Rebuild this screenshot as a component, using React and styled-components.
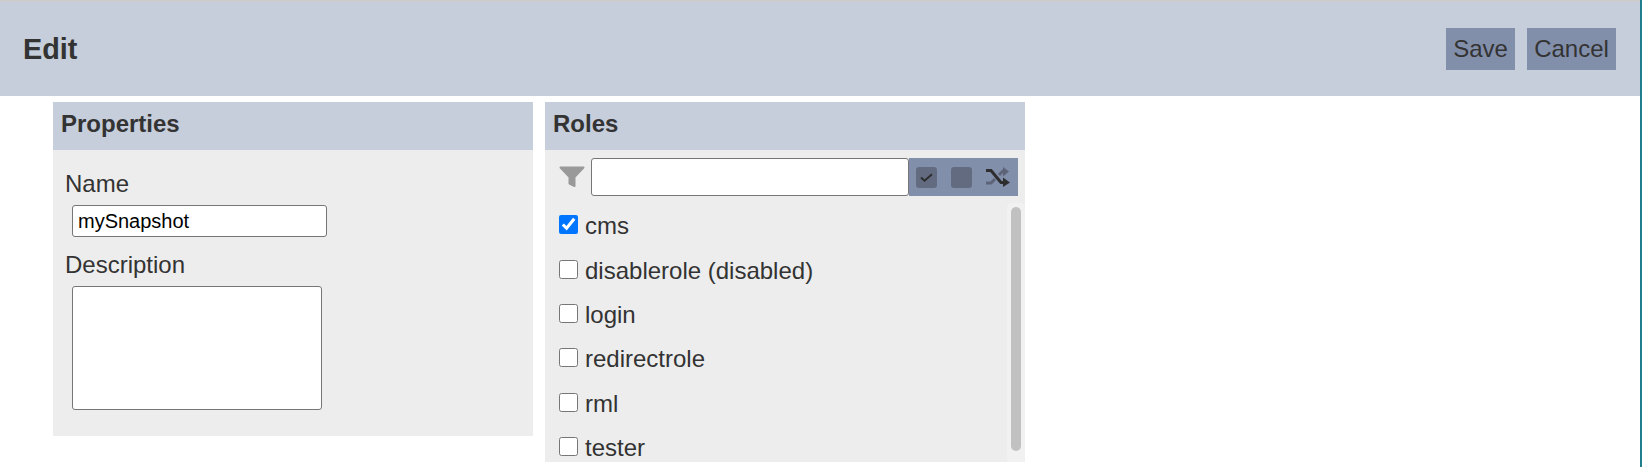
import React from 'react';
import styled, { createGlobalStyle } from 'styled-components';

const Global = createGlobalStyle`
  html, body { margin: 0; padding: 0; height: 467px; overflow: hidden; background: #fff; }
  body { font-family: "Liberation Sans", Arial, sans-serif; color: #333; }
  * { box-sizing: border-box; }
`;

const Page = styled.div`
  width: 1642px;
  height: 467px;
  overflow: hidden;
  border-right: 2px solid #1f7f8c;
`;
const TopBar = styled.header`
  height: 96px;
  background: #c6cddb;
  border-top: 2px solid #ccc;
  display: flex;
  align-items: center;
  justify-content: space-between;
  padding: 0 24px 0 23px;
`;
const Title = styled.h1`
  margin: 0;
  font-size: 28.8px;
  font-weight: 700;
`;
const Actions = styled.div`
  display: flex;
  gap: 12px;
`;
const ActionButton = styled.button`
  height: 42px;
  min-width: ${p => p.$minWidth}px;
  padding: 0 7px;
  border: 0;
  background: #828fab;
  color: #333;
  font: 24px "Liberation Sans", Arial, sans-serif;
`;
const Panels = styled.main`
  display: flex;
  padding: 6px 0 0 53px;
  gap: 12px;
`;
const Panel = styled.section`
  width: 480px;
  height: ${p => p.$height}px;
  background: #ededed;
  overflow: hidden;
`;
const PanelHead = styled.h2`
  margin: 0;
  height: 48px;
  line-height: 44px;
  padding-left: 8px;
  background: #c6cddb;
  font-size: 24px;
  font-weight: 700;
`;
const Form = styled.div`
  padding: 21px 0 0 12px;
`;
const Label = styled.label`
  display: block;
  font-size: 24px;
  line-height: 26px;
`;
const NameInput = styled.input`
  display: block;
  width: 255px;
  height: 32px;
  margin: 8px 0 15px 7px;
  padding: 1px 5px;
  border: 1px solid #767676;
  border-radius: 3px;
  background: #fff;
  color: #000;
  font: 20px "Liberation Sans", Arial, sans-serif;
`;
const DescInput = styled.textarea`
  display: block;
  width: 250px;
  height: 124px;
  margin: 8px 0 0 7px;
  border: 1px solid #767676;
  border-radius: 3px;
  background: #fff;
  resize: none;
`;
const FilterRow = styled.div`
  display: flex;
  align-items: center;
  height: 38px;
  margin: 8px 7px 0 14px;
`;
const FunnelWrap = styled.span`
  display: flex;
  width: 32px;
  flex: none;
`;
const FilterInput = styled.input`
  flex: 1;
  min-width: 0;
  height: 38px;
  padding: 1px 6px;
  border: 1px solid #767676;
  border-radius: 3px;
  background: #fff;
`;
const Tools = styled.div`
  width: 109px;
  height: 38px;
  background: #828fab;
  display: flex;
  align-items: center;
  padding-left: 7px;
  gap: 14px;
  flex: none;
`;
const ToolBox = styled.span`
  width: 21px;
  height: 21px;
  border-radius: 3px;
  background: #636b80;
  display: flex;
  align-items: center;
  justify-content: center;
`;
const ListArea = styled.div`
  position: relative;
  padding: 9px 0 0 14px;
`;
const Row = styled.label`
  display: flex;
  align-items: center;
  height: 44.4px;
  padding-bottom: 2px;
  font-size: 24px;
  gap: 7px;
`;
const Check = styled.input`
  width: 19px;
  height: 19px;
  margin: 0 0 3px 0;
  accent-color: #0075ff;
`;
const Track = styled.div`
  position: absolute;
  top: 7px;
  right: 0;
  width: 18px;
  height: 270px;
  background: #f1f1f1;
  border-radius: 5px 5px 0 0;
  padding: 4px 4px 0;
`;
const Thumb = styled.div`
  width: 10px;
  height: 244px;
  background: #c1c1c1;
  border-radius: 5px;
`;

const Funnel = () => (
  <svg width="26" height="22" viewBox="0 0 26 22">
    <path
      d="M1.5 1.5h23L15.5 11v9l-5-2.5V11z"
      fill="#999"
      stroke="#999"
      strokeWidth="2"
      strokeLinejoin="round"
    />
  </svg>
);
const Tick = () => (
  <svg width="15" height="15" viewBox="0 0 15 15">
    <path d="M2 7.5l3.5 3.2 7.5-6.5" fill="none" stroke="#2e2e2e" strokeWidth="2" />
  </svg>
);
const Shuffle = () => (
  <svg width="24" height="20" viewBox="0 0 24 20">
    <path d="M0 16h5l4-4M13 8l4-4h2" fill="none" stroke="#5d6477" strokeWidth="3" />
    <path d="M17 0l6 4.5-6 5z" fill="#5d6477" />
    <path d="M0 3.5h5l10 12h3" fill="none" stroke="#2e2e2e" strokeWidth="3" />
    <path d="M17 10.5l7 5-7 4.5z" fill="#2e2e2e" />
  </svg>
);

const roles = [
  ['cms', true],
  ['disablerole (disabled)', false],
  ['login', false],
  ['redirectrole', false],
  ['rml', false],
  ['tester', false],
];

export default function App() {
  return (
    <Page>
      <Global />
      <TopBar>
        <Title>Edit</Title>
        <Actions>
          <ActionButton $minWidth={69}>Save</ActionButton>
          <ActionButton $minWidth={89}>Cancel</ActionButton>
        </Actions>
      </TopBar>
      <Panels>
        <Panel $height={334}>
          <PanelHead>Properties</PanelHead>
          <Form>
            <Label>Name</Label>
            <NameInput defaultValue="mySnapshot" />
            <Label>Description</Label>
            <DescInput />
          </Form>
        </Panel>
        <Panel $height={360}>
          <PanelHead>Roles</PanelHead>
          <FilterRow>
            <FunnelWrap><Funnel /></FunnelWrap>
            <FilterInput />
            <Tools>
              <ToolBox><Tick /></ToolBox>
              <ToolBox />
              <Shuffle />
            </Tools>
          </FilterRow>
          <ListArea>
            {roles.map(([name, on]) => (
              <Row key={name}>
                <Check type="checkbox" defaultChecked={on} />
                {name}
              </Row>
            ))}
            <Track><Thumb /></Track>
          </ListArea>
        </Panel>
      </Panels>
    </Page>
  );
}
